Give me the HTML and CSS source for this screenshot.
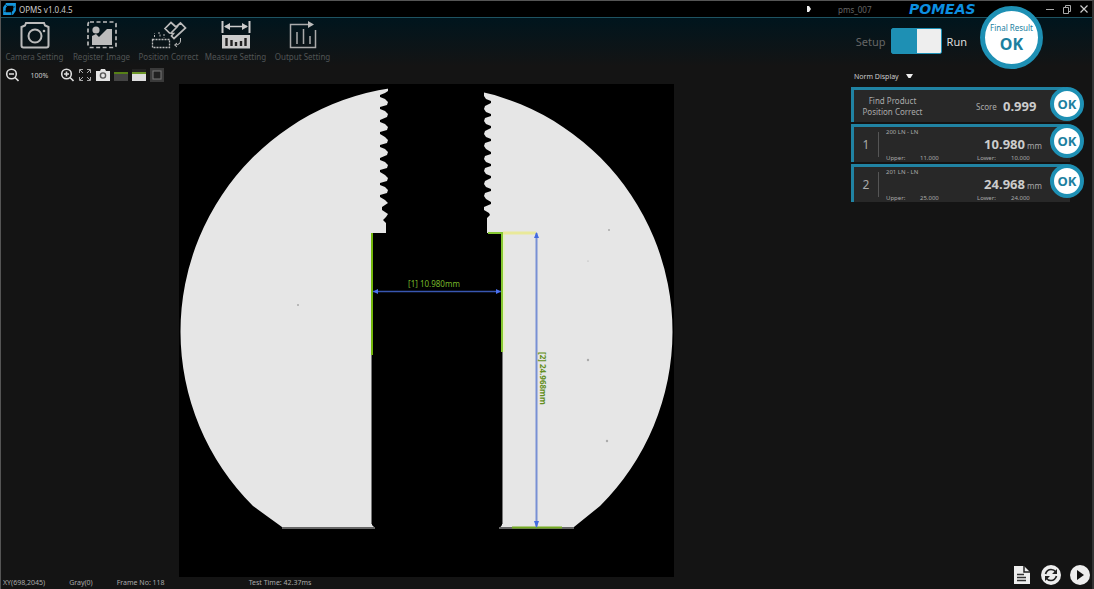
FILE: index.html
```html
<!DOCTYPE html>
<html lang="en">
<head>
<meta charset="utf-8">
<title>OPMS v1.0.4.5</title>
<link rel="stylesheet" href="styles.css">
</head>
<body>
<div class="app">
  <header class="titlebar">
    <div class="brand">
      <svg class="logo" viewBox="0 0 14 13"><path d="M4 1.500H12.500V8L10 11.500H1.500V5Z" fill="none" stroke="#1496dc" stroke-width="2.800"/><path d="M2.500 1.500 5 4M13 4 10 5M1 9 4.500 8.500M9.500 13 9 9" stroke="#000" stroke-width=".7"/></svg>
      <h1 class="app-name">OPMS v1.0.4.5</h1>
    </div>
    <svg class="marker" viewBox="0 0 6 8"><path d="M1 1H3L5 4 3 7H1Z" fill="#eee"/></svg>
    <span class="program">pms_007</span>
    <span class="wordmark">POMEAS</span>
    <div class="window-buttons">
      <button class="icon-button" aria-label="Minimize"><svg viewBox="0 0 10 10"><path d="M1 5.500H9" stroke="#aaa"/></svg></button>
      <button class="icon-button" aria-label="Restore"><svg viewBox="0 0 10 10"><path d="M1.500 3.500H6.500V9.500H1.500ZM3.500 3V1.500H8.500V7.500H7" fill="none" stroke="#aaa"/></svg></button>
      <button class="icon-button" aria-label="Close"><svg viewBox="0 0 10 10"><path d="M1.500 1.500 8.500 8.500M8.500 1.500 1.500 8.500" stroke="#ccc" stroke-width="1.200"/></svg></button>
    </div>
  </header>

  <div class="ribbon">
    <nav class="steps">
      <button class="step"><svg viewBox="0 0 30 28"><path d="M6 2H24L25 4.500 28.500 6V24.500Q28.500 26.500 26.500 26.500H3.500Q1.500 26.500 1.500 24.500V6L5 4.500Z" fill="none" stroke="#bbb" stroke-width="2"/><circle cx="15" cy="15" r="6.500" fill="none" stroke="#bbb" stroke-width="2"/><circle cx="24" cy="10" r="1.300" fill="#bbb"/></svg>Camera Setting</button>
      <button class="step"><svg viewBox="0 0 30 28"><rect x="1" y="1" width="28" height="25.500" rx="2" fill="none" stroke="#bbb" stroke-width="1.700" stroke-dasharray="4 2.500"/><circle cx="9" cy="9" r="3.600" fill="#bbb"/><path d="M5 24V15L9 13 12 16 20 8H25V24Z" fill="#bbb"/></svg>Register Image</button>
      <button class="step"><svg viewBox="0 0 36 28"><g fill="none" stroke="#bbb"><path d="M1.500 18.500H18.500V26.500H1.500Z" stroke-dasharray="2 1" stroke-width="1.300"/><path d="M3.500 16V12M7 12H9V16M13 13V17" stroke-dasharray="2 1.500"/><path d="M14 7.500 20 1.500 25 6 29.500 2 34.500 7 23 17.500 20.500 15 22.500 12.500 18.500 12ZM20 12 27 5" stroke-width="1.700"/><path d="M29.500 17V20Q29 24 24 24M26 22 23.500 24 26 26"/></g></svg>Position Correct</button>
      <button class="step"><svg viewBox="0 0 30 28"><path d="M1.500 0V12M28.500 0V12" stroke="#ccc" stroke-width="2"/><path d="M4 5.500H26" stroke="#ccc" stroke-width="1.500"/><path d="M3 5.500 9 2V9ZM27 5.500 21 2V9Z" fill="#ccc"/><rect x="1" y="14" width="28" height="13.500" fill="#ccc"/><path d="M5.500 17V25M10.500 19V25M15 21V25M20 20V25M24.500 17V25" stroke="#222" stroke-width="2.400"/></svg>Measure Setting</button>
      <button class="step"><svg viewBox="0 0 30 28"><path d="M27.500 9V26.500H2.500V3.500H23M9 11V23M15.500 8V23M22 15V23" fill="none" stroke="#aaa" stroke-width="1.500"/><path d="M20 0 26 3.500 20 7Z" fill="#bbb"/></svg>Output Setting</button>
    </nav>
    <label class="mode">
      <span class="mode-off">Setup</span>
      <input class="switch" type="checkbox" role="switch" checked>
      <span class="mode-on">Run</span>
    </label>
    <div class="final"><span class="final-label">Final Result</span><strong class="final-value">OK</strong></div>
  </div>

  <main class="workspace">
    <section class="viewer">
      <div class="tools">
        <button class="icon-button tool" aria-label="Zoom out"><svg viewBox="0 0 14 14"><circle cx="6.500" cy="6" r="4.800" fill="none" stroke="#ddd" stroke-width="1.600"/><path d="M4 6H9M10 9.500 13.500 13" stroke="#ddd" stroke-width="1.600"/></svg></button>
        <span class="zoom-level">100%</span>
        <button class="icon-button tool" aria-label="Zoom in"><svg viewBox="0 0 14 14"><circle cx="6.500" cy="6" r="4.800" fill="none" stroke="#ddd" stroke-width="1.600"/><path d="M4 6H9M6.500 3.500V8.500M10 9.500 13.500 13" stroke="#ddd" stroke-width="1.600"/></svg></button>
        <button class="icon-button tool" aria-label="Fit to view"><svg viewBox="0 0 14 14"><path d="M1.500 5V1.500H5M9 1.500H12.500V5M12.500 9V12.500H9M5 12.500H1.500V9M2 2 5 5M12 2 9 5M12 12 9 9M2 12 5 9" fill="none" stroke="#aaa"/></svg></button>
        <button class="icon-button tool" aria-label="Snapshot"><svg viewBox="0 0 14 14"><path d="M0 3H4L5 1H9L10 3H14V13H0Z" fill="#e4e4e4"/><circle cx="7" cy="7.500" r="2.600" fill="none" stroke="#555" stroke-width="1.400"/></svg></button>
        <button class="icon-button tool" aria-label="Dark overlay"><svg viewBox="0 0 14 14"><path d="M0 1H14V13H0Z" fill="#444"/><path d="M0 1H14V4H0Z" fill="#151515"/><path d="M0 4H14V6H0Z" fill="#568016"/></svg></button>
        <button class="icon-button tool" aria-label="Light overlay"><svg viewBox="0 0 14 14"><path d="M0 1H14V13H0Z" fill="#ddd"/><path d="M0 1H14V4H0Z" fill="#222"/><path d="M0 4H14V6H0Z" fill="#6d9728"/></svg></button>
        <button class="icon-button tool" aria-label="Region"><svg viewBox="0 0 14 14"><path d="M0 0H14V14H0Z" fill="#3a3a3a"/><rect x="3" y="3" width="8" height="8" fill="#202020" stroke="#777"/></svg></button>
      </div>
      <svg class="stage" viewBox="179 84 495 493" role="img" aria-label="Shadow image of the threaded part with measurements">
        <path d="M179 84H674V577H179Z" fill="#000"/>
        <path d="M282 527Q264 514 253 506A246 246 0 1 1 600 506L574 527Z" fill="#e6e6e6"/>
        <path fill="#000" d="M388 84V91L385 93 380 95V97L385 99 388 102 387 105 380 107V109L385 111 388 114 387 117 380 120V122L385 124 388 127 387 130 380 132V134L385 137 388 140 387 143 380 145V147L385 149 388 152 387 155 380 158V160L385 162 388 165 387 168 380 170V172L385 175 388 178 387 181 380 183V185L385 187 388 190 387 193 380 195V197L385 200 388 203 382 207V210L388 214 386 217 383 220 386 223V233H372V525L376 529H499L502 525V233H487V218L490 215 489 213 484 210V207L491 204V202L486 199 484 196 485 193 491 191V189L486 187 484 184 485 181 491 178V176L486 174 484 171 485 168 491 166V164L486 162 484 159 485 156 491 154V152L486 149 484 146 485 143 491 141V139L486 137 484 134 485 131 491 128V126L486 124 484 121 485 118 491 116V114L486 112 484 109 485 106 491 103V101L486 99 484 96V84Z"/>
        <path d="M371.500 355V524M502.500 352V524" stroke="#777" fill="none"/>
        <path d="M282 528H375M499 528H574" stroke="#888" stroke-width="1.500"/>
        <path d="M372 233V355" stroke="#73b70b" stroke-width="2"/>
        <path d="M502 233V352M488 233H503" stroke="#86c832" stroke-width="2" fill="none"/>
        <path d="M504 234V352" stroke="#e6efc8" stroke-width="2"/>
        <path d="M503 233H536" stroke="#e9e99a" stroke-width="3"/>
        <path d="M512 527.500H562" stroke="#73aa20" stroke-width="2"/>
        <path d="M373 291.500H501" stroke="#3856b0" stroke-width="1.500"/>
        <path d="M373 291.500 378 289V294ZM501 291.500 496 289V294Z" fill="#4a70ef"/>
        <path d="M536.500 233V527" stroke="#7890d4" stroke-width="2"/>
        <path d="M536.500 232 539 238H534ZM536.500 528 539 521H534Z" fill="#426be0"/>
        <text class="dimension" x="408" y="287">[1] 10.980mm</text>
        <text class="dimension dimension-dark" transform="translate(540 352) rotate(90)">[2] 24.968mm</text>
        <g fill="#aaa"><circle cx="298" cy="305" r="1"/><circle cx="609" cy="230" r="1"/><circle cx="588" cy="360" r="1.200"/><circle cx="607" cy="441" r="1.200"/><circle cx="588" cy="261" r=".6"/></g>
      </svg>
      <footer class="status">
        <span>XY(698,2045)</span><span>Gray(0)</span><span class="status-frame">Frame No: 118</span><span>Test Time: 42.37ms</span>
      </footer>
    </section>

    <aside class="results">
      <button class="display-menu">Norm Display <svg class="caret" viewBox="0 0 7 4"><path d="M0 0H7L4.500 4H2.500Z" fill="#eee"/></svg></button>
      <article class="card card-short">
        <p class="match">Find Product<br>Position Correct</p>
        <span class="score-label">Score</span><strong class="reading">0.999</strong>
        <span class="badge">OK</span>
      </article>
      <article class="card">
        <span class="index">1</span>
        <div class="detail">
          <span class="item-name">200 LN - LN</span>
          <p class="value"><strong class="reading">10.980</strong> mm</p>
          <p class="limits"><span>Upper:</span><span>11.000</span><span>Lower:</span><span>10.000</span></p>
        </div>
        <span class="badge">OK</span>
      </article>
      <article class="card">
        <span class="index">2</span>
        <div class="detail">
          <span class="item-name">201 LN - LN</span>
          <p class="value"><strong class="reading">24.968</strong> mm</p>
          <p class="limits"><span>Upper:</span><span>25.000</span><span>Lower:</span><span>24.000</span></p>
        </div>
        <span class="badge">OK</span>
      </article>
      <div class="actions">
        <button class="icon-button action" aria-label="Report"><svg viewBox="0 0 20 20"><path d="M2 1H12L18 7V19H2Z" fill="#eee"/><path d="M12 1V7H18" fill="none" stroke="#222" stroke-width="1.500"/><path d="M5 9.500H12M5 12.500H14M5 15.500H14" stroke="#333" stroke-width="1.300"/></svg></button>
        <button class="icon-button action" aria-label="Refresh"><svg viewBox="0 0 20 20"><circle cx="10" cy="10" r="10" fill="#eee"/><path d="M4.500 9Q6 4.500 10 4.500 13 4.500 15 7M15.500 11Q14 15.500 10 15.500 7 15.500 5 13" fill="none" stroke="#222" stroke-width="1.700"/><path d="M16 4V9H11ZM4 16V11H9Z" fill="#222"/></svg></button>
        <button class="icon-button action" aria-label="Run once"><svg viewBox="0 0 20 20"><circle cx="10" cy="10" r="10" fill="#eee"/><path d="M7 5 14 10 7 15Z" fill="#111"/></svg></button>
      </div>
    </aside>
  </main>
</div>
</body>
</html>
```
FILE: styles.css
```css
* { box-sizing: border-box; }
body {
  margin: 0;
  background: #141414;
  color: #aaa;
  font-family: "Noto Sans", "Open Sans", sans-serif;
  font-size: 8px;
}
p, h1 { margin: 0; }
button { font: inherit; color: inherit; background: none; border: 0; padding: 0; }
svg { display: block; }
.app {
  min-height: 100vh;
  display: flex;
  flex-direction: column;
  border: 1px solid #555;
  border-right-width: 2px;
  border-right-color: #333;
  border-bottom: 0;
}
.titlebar {
  height: 17px;
  display: flex;
  align-items: center;
  background: #000;
  border-bottom: 1px solid #1e5362;
  padding-right: 3px;
}
.brand { display: flex; align-items: center; gap: 3px; margin-right: auto; padding-left: 2px; }
.logo { width: 13px; height: 12px; }
.app-name { font-size: 8px; font-weight: 400; color: #ccc; }
.marker { width: 6px; height: 8px; margin-right: 26px; }
.program { width: 71px; color: #666; }
.wordmark {
  width: 136px;
  font: italic bold 14px/16px "DejaVu Sans", sans-serif;
  color: #0c8fe0;
}
.window-buttons { display: flex; gap: 7px; }
.icon-button { display: block; width: 10px; height: 10px; }
.icon-button svg { width: 100%; height: 100%; }

.ribbon {
  height: 48px;
  display: flex;
  align-items: flex-start;
  background: linear-gradient(#00151d, #141414);
  padding-right: 49px;
}
.steps { display: flex; margin-right: auto; padding-top: 3px; }
.step {
  width: 67px;
  display: flex;
  flex-direction: column;
  align-items: center;
  gap: 2px;
  color: #505455;
  line-height: 12px;
  white-space: nowrap;
}
.step svg { height: 28px; }
.mode { display: flex; align-items: center; gap: 5px; padding-top: 10px; margin-right: 13px; font-size: 11px; }
.mode-off { color: #666; }
.mode-on { color: #ddd; }
.switch {
  appearance: none;
  width: 51px;
  height: 26px;
  margin: 0;
  border: 1px solid #1e90b4;
  border-radius: 2px;
  background: linear-gradient(90deg, #1e90b4 52%, #eee 52%);
}
.final {
  position: relative;
  width: 63px;
  height: 63px;
  margin-top: -12px;
  display: flex;
  flex-direction: column;
  align-items: center;
  justify-content: center;
  flex: none;
  border: 5px solid #1e90b4;
  border-radius: 50%;
  background: #fff;
  color: #1c7f9f;
  white-space: nowrap;
}
.final-label { line-height: 12px; }
.final-value { font-size: 16px; line-height: 20px; }

.workspace { flex: 1; display: grid; grid-template-columns: 1fr 241px; }
.viewer { display: flex; flex-direction: column; align-items: center; }
.tools { align-self: stretch; display: flex; gap: 4px; align-items: center; height: 18px; padding-left: 4px; }
.tool { width: 14px; height: 14px; }
.zoom-level { width: 33px; text-align: center; color: #ccc; font-size: 7px; }
.stage { width: 100%; max-width: 495px; height: auto; }
.dimension { font-size: 8px; fill: #76b82a; }
.dimension-dark { fill: #648f22; font-weight: 700; }
.status { align-self: stretch; display: flex; gap: 24px; padding-left: 2px; font-size: 7px; line-height: 12px; }
.status-frame { margin-right: 60px; }

.results { display: flex; flex-direction: column; align-items: flex-start; padding-right: 2px; }
.display-menu { display: flex; align-items: center; gap: 1px; height: 20px; padding-left: 3px; margin-bottom: 1px; color: #ccc; font-size: 7px; gap: 7px; }
.caret { width: 7px; height: 4px; }
.card {
  position: relative;
  width: 219px;
  height: 38px;
  display: flex;
  align-items: center;
  margin-bottom: 2px;
  border: solid #2083a3;
  border-width: 3px 0 0 3px;
  border-top-right-radius: 6px;
  background: #282828;
}
.card-short { height: 35px; }
.match { width: 77px; margin-right: 45px; text-align: center; line-height: 11px; }
.score-label { width: 27px; }
.reading { font-size: 13px; color: #ccc; }
.index {
  width: 25px;
  border-right: 1px solid #555;
  text-align: center;
  font-size: 12px;
  line-height: 25px;
}
.detail { flex: 1; padding-left: 7px; font-size: 6px; line-height: 8px; }
.item-name { display: block; }
.value { padding-right: 28px; text-align: right; font-size: 8px; line-height: 16px; }
.limits { display: grid; grid-template-columns: 34px 57px 34px 1fr; }
.badge {
  position: absolute;
  right: -14px;
  top: -3px;
  width: 34px;
  height: 34px;
  border: 4px solid #1e90b4;
  border-radius: 50%;
  background: #fff;
  color: #1c7f9f;
  font-size: 13px;
  font-weight: 700;
  line-height: 26px;
  text-align: center;
}
.actions { display: flex; gap: 9px; margin: auto 0 4px auto; }
.action { width: 20px; height: 20px; }
```
